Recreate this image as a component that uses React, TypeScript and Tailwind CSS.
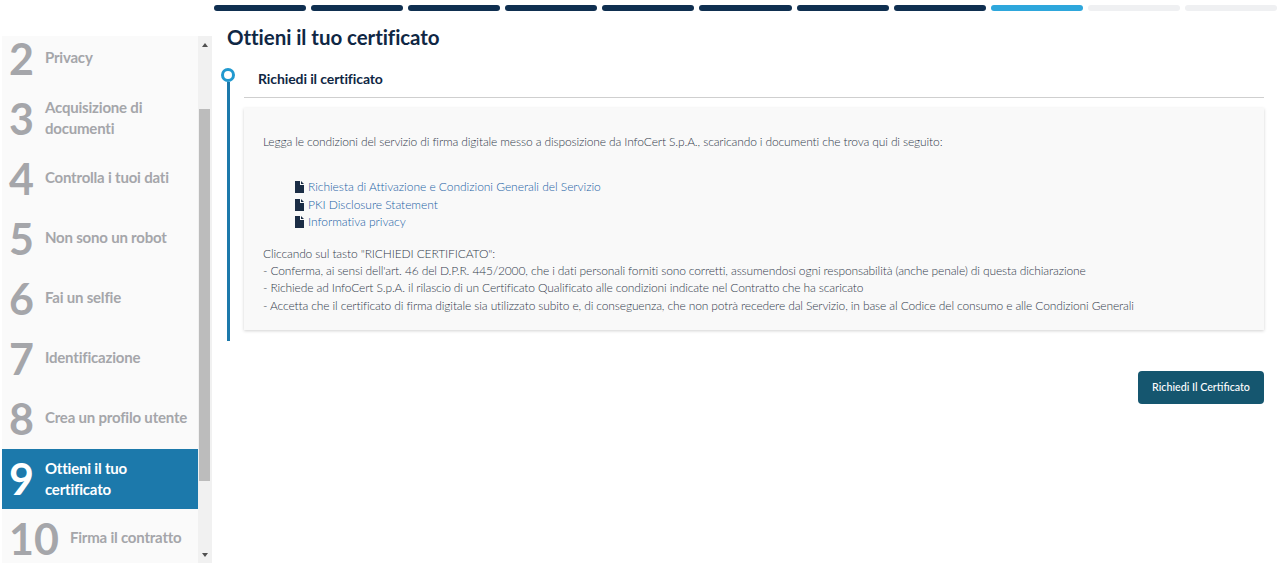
import React from 'react';

const steps = [
  { n: 2, label: ['Privacy'] },
  { n: 3, label: ['Acquisizione di', 'documenti'] },
  { n: 4, label: ['Controlla i tuoi dati'] },
  { n: 5, label: ['Non sono un robot'] },
  { n: 6, label: ['Fai un selfie'] },
  { n: 7, label: ['Identificazione'] },
  { n: 8, label: ['Crea un profilo utente'] },
  { n: 9, label: ['Ottieni il tuo', 'certificato'], active: true },
  { n: 10, label: ['Firma il contratto'] },
];

const bars = ['d', 'd', 'd', 'd', 'd', 'd', 'd', 'd', 'c', 'e', 'e'];

const FileIcon = () => (
  <svg width="9" height="12" viewBox="0 0 9 12" className="shrink-0">
    <path d="M0 0h5v4h4v8H0z M6 0l3 3H6z" fill="#1b2d45" />
  </svg>
);

const docs = [
  'Richiesta di Attivazione e Condizioni Generali del Servizio',
  'PKI Disclosure Statement',
  'Informativa privacy',
];

export default function App() {
  return (
    <div className="h-[569px] w-[1280px] overflow-hidden bg-white font-['Lato',sans-serif]">
      <div className="flex h-[36px] pl-[214px] pr-[3px] pt-[5px] gap-[5px] items-start">
        {bars.map((b, i) => (
          <div
            key={i}
            className={
              b === 'd'
                ? 'h-[6px] flex-1 rounded-full bg-[#0f2f50]'
                : b === 'c'
                ? 'h-[6px] flex-1 rounded-full bg-[#2ea7dc]'
                : 'h-[6px] flex-1 rounded-full bg-[#eff0f2]'
            }
          />
        ))}
      </div>

      <div className="flex items-start">
        <aside className="ml-[2px] flex h-[527px] w-[210px] shrink-0 overflow-hidden">
          <div className="h-full w-[196px] overflow-hidden bg-[#fafafa]">
            <div className="-mt-[7px]">
              {steps.map((s) => (
                <div
                  key={s.n}
                  className={
                    s.active
                      ? 'flex h-[60px] items-center bg-[#1c79ab] pl-[7px] text-white'
                      : 'flex h-[60px] items-center pl-[7px] text-[#a5a6aa]'
                  }
                >
                  <span className="mr-[11px] -mt-[2px] text-[43px] leading-none font-bold">{s.n}</span>
                  <span
                    className={
                      s.active
                        ? 'text-[15px] leading-[21px] font-bold tracking-[-0.2px]'
                        : '-mt-[3px] text-[15px] leading-[21px] font-bold tracking-[-0.2px]'
                    }
                  >
                    {s.label.map((l) => (
                      <span key={l} className="block">
                        {l}
                      </span>
                    ))}
                  </span>
                </div>
              ))}
            </div>
          </div>
          <div className="flex h-full w-[14px] flex-col items-center bg-[#f1f1f1]">
            <div className="flex h-[17px] w-full items-center justify-center">
              <div className="h-0 w-0 border-x-[3.5px] border-b-[4px] border-x-transparent border-b-[#505050]" />
            </div>
            <div className="mt-[56px] ml-[1px] h-[372px] w-[11px] self-start bg-[#bcbcbc]" />
            <div className="mt-auto flex h-[17px] w-full items-center justify-center">
              <div className="h-0 w-0 border-x-[3.5px] border-t-[4px] border-x-transparent border-t-[#505050]" />
            </div>
          </div>
        </aside>

        <main className="ml-[15px] w-[1037px] shrink-0 -mt-[12px]">
          <h1 className="text-[20.5px] leading-[26px] font-bold tracking-[-0.06px] text-[#0f2744]">
            Ottieni il tuo certificato
          </h1>
          <div className="mt-[18px] -ml-[6px] flex">
            <div className="flex w-[14px] shrink-0 flex-col items-center">
              <div className="h-[14px] w-[14px] rounded-full border-[3px] border-[#2199cf] bg-white" />
              <div className="h-[259px] w-[3px] bg-[#1c79ab]" />
            </div>
            <div className="ml-[9px] w-[1020px]">
              <div className="flex h-[30px] items-start border-b border-[#cfcfcf] pl-[14px]">
                <h2 className="mt-[1px] text-[14px] leading-[19px] font-bold tracking-[-0.1px] text-[#0f2744]">
                  Richiedi il certificato
                </h2>
              </div>
              <section className="mt-[10px] h-[222px] bg-[#f9f9f9] pl-[19px] pt-[25px] text-[12px] leading-[17.4px] font-light tracking-[-0.13px] text-[#333b4c] shadow-[0_1px_3px_rgba(0,0,0,0.18)]">
                <p>
                  Legga le condizioni del servizio di firma digitale messo a disposizione da InfoCert S.p.A., scaricando i documenti che trova qui di seguito:
                </p>
                <ul className="mt-[28px] pl-[32px] tracking-[-0.04px] text-[#1a62a5]">
                  {docs.map((d) => (
                    <li key={d} className="flex items-center gap-[4px]">
                      <FileIcon />
                      {d}
                    </li>
                  ))}
                </ul>
                <p className="mt-[14px]">Cliccando sul tasto "RICHIEDI CERTIFICATO":</p>
                <p>- Conferma, ai sensi dell'art. 46 del D.P.R. 445/2000, che i dati personali forniti sono corretti, assumendosi ogni responsabilità (anche penale) di questa dichiarazione</p>
                <p>- Richiede ad InfoCert S.p.A. il rilascio di un Certificato Qualificato alle condizioni indicate nel Contratto che ha scaricato</p>
                <p>- Accetta che il certificato di firma digitale sia utilizzato subito e, di conseguenza, che non potrà recedere dal Servizio, in base al Codice del consumo e alle Condizioni Generali</p>
              </section>
              <div className="mt-[41px] flex justify-end">
                <button className="h-[33px] w-[126px] rounded-[4px] bg-[#15566f] text-[10.7px] font-medium text-white">
                  Richiedi Il Certificato
                </button>
              </div>
            </div>
          </div>
        </main>
      </div>
    </div>
  );
}
